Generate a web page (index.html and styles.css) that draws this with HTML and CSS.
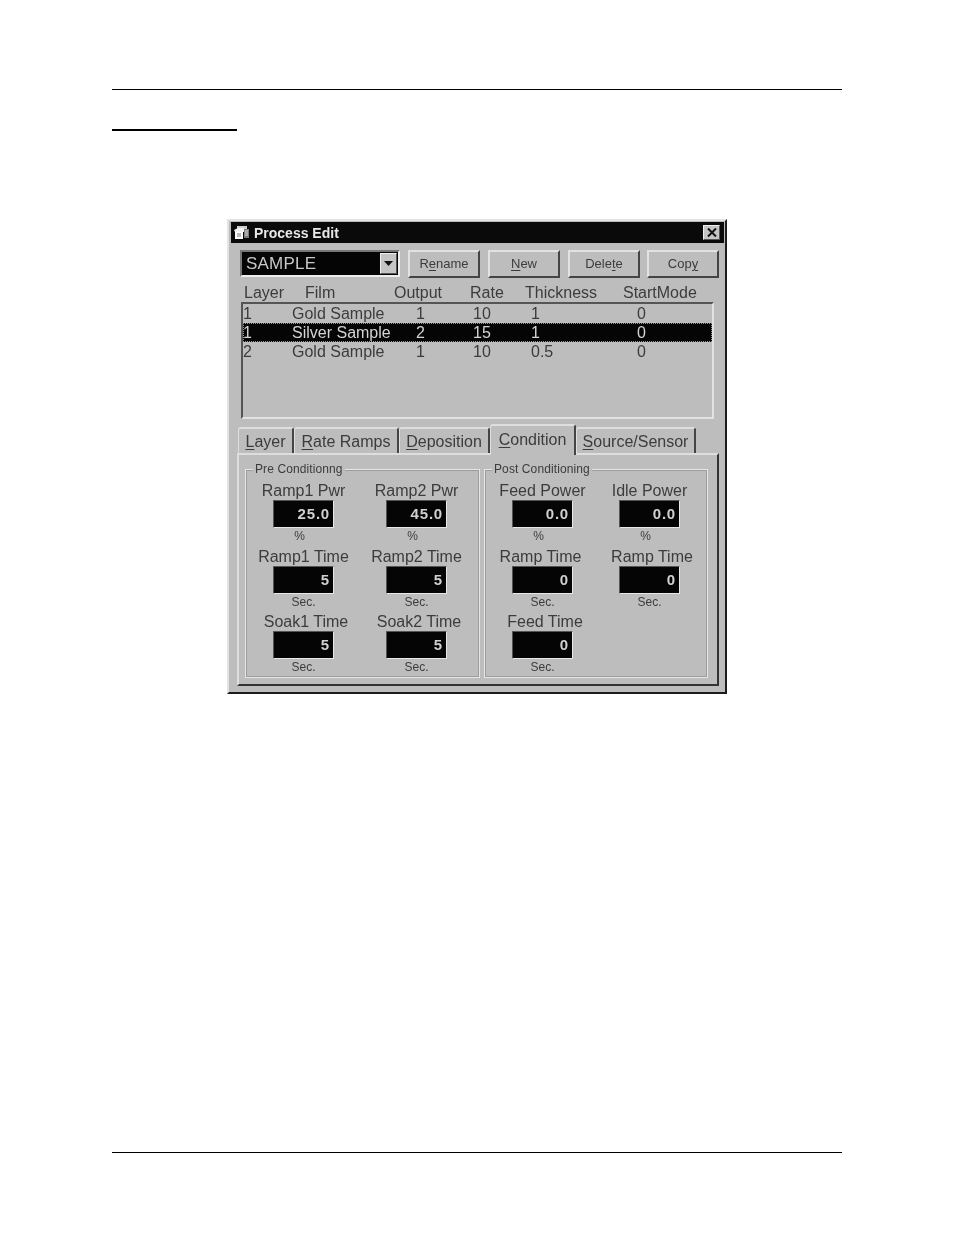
FILE: index.html
```html
<!DOCTYPE html>
<html lang="en">
<head>
<meta charset="UTF-8" />
<title>Process Edit</title>
<link rel="stylesheet" href="styles.css">
</head>
<body>
<div class="page">
  <div class="top-rule"></div>
  <div class="heading-rule"></div>

  <div class="dialog">
    <!-- Title bar -->
    <div class="titlebar">
      <svg class="title-icon" width="17" height="15" viewBox="0 0 17 15" aria-hidden="true">
        <path d="M4 1 H14 V4 H4 Z" fill="#cfcfcf"/>
        <path d="M1 5 L5 3 H11 V7 H2 Z" fill="#f2f2f2"/>
        <path d="M11 4 H16 V13 H11 Z" fill="#7d7d7d"/>
        <path d="M12 6 H15 M12 8 H15 M12 10 H15" stroke="#d8d8d8" stroke-width="1"/>
        <path d="M2 7 H10 V14 H2 Z" fill="#fff"/>
        <path d="M4 9 H8 M4 11 H8" stroke="#777" stroke-width="1"/>
      </svg>
      <span class="title-text">Process Edit</span>
      <span class="close-btn">
        <svg width="10" height="9" viewBox="0 0 10 9" aria-hidden="true">
          <path d="M1 0.5 L9 8.5 M9 0.5 L1 8.5" stroke="#111" stroke-width="2" fill="none"/>
        </svg>
      </span>
    </div>

    <!-- Process selector and buttons -->
    <div class="toolbar">
      <div class="combo">
        <span class="combo-text">SAMPLE</span>
        <span class="combo-arrow"><svg width="9" height="5" viewBox="0 0 9 5" aria-hidden="true"><path d="M0 0 H9 L4.5 5 Z" fill="#111"/></svg></span>
      </div>
      <div class="btn">R<u>e</u>name</div>
      <div class="btn"><u>N</u>ew</div>
      <div class="btn">Dele<u>t</u>e</div>
      <div class="btn btn-last">Cop<u>y</u></div>
    </div>

    <!-- Layer list -->
    <div class="list-head">
      <span>Layer</span><span>Film</span><span>Output</span><span>Rate</span><span>Thickness</span><span>StartMode</span>
    </div>
    <div class="list">
      <div class="row"><span>1</span><span>Gold Sample</span><span>1</span><span>10</span><span>1</span><span>0</span></div>
      <div class="row selected"><span>1</span><span>Silver Sample</span><span>2</span><span>15</span><span>1</span><span>0</span></div>
      <div class="row"><span>2</span><span>Gold Sample</span><span>1</span><span>10</span><span>0.5</span><span>0</span></div>
    </div>

    <!-- Tabs -->
    <div class="tabs">
      <div class="tab tab-layer"><u>L</u>ayer</div>
      <div class="tab tab-rate"><u>R</u>ate Ramps</div>
      <div class="tab tab-dep"><u>D</u>eposition</div>
      <div class="tab tab-cond active"><u>C</u>ondition</div>
      <div class="tab tab-src"><u>S</u>ource/Sensor</div>
    </div>

    <div class="panel">
      <div class="group group-pre">
        <span class="group-title">Pre Conditionng</span>
        <div class="fields">
          <div class="cell"><div class="lab">Ramp1 Pwr</div><div class="value">25.0</div><div class="unit pct">%</div></div>
          <div class="cell"><div class="lab">Ramp2 Pwr</div><div class="value">45.0</div><div class="unit pct">%</div></div>
          <div class="cell"><div class="lab">Ramp1 Time</div><div class="value">5</div><div class="unit">Sec.</div></div>
          <div class="cell"><div class="lab">Ramp2 Time</div><div class="value">5</div><div class="unit">Sec.</div></div>
          <div class="cell"><div class="lab shift-r">Soak1 Time</div><div class="value">5</div><div class="unit">Sec.</div></div>
          <div class="cell"><div class="lab shift-r">Soak2 Time</div><div class="value">5</div><div class="unit">Sec.</div></div>
        </div>
      </div>
      <div class="group group-post">
        <span class="group-title">Post Conditioning</span>
        <div class="fields">
          <div class="cell"><div class="lab">Feed Power</div><div class="value">0.0</div><div class="unit pct">%</div></div>
          <div class="cell"><div class="lab">Idle Power</div><div class="value">0.0</div><div class="unit pct">%</div></div>
          <div class="cell"><div class="lab shift-l">Ramp Time</div><div class="value">0</div><div class="unit">Sec.</div></div>
          <div class="cell"><div class="lab shift-r">Ramp Time</div><div class="value">0</div><div class="unit">Sec.</div></div>
          <div class="cell"><div class="lab shift-r">Feed Time</div><div class="value">0</div><div class="unit">Sec.</div></div>
        </div>
      </div>
    </div>
  </div>

  <div class="bottom-rule"></div>
</div>
</body>
</html>
```

FILE: styles.css
```css
html, body {
  margin: 0;
  background: #fff;
}
.page {
  width: 954px;
  height: 1235px;
  padding: 89px 112px 0;
  box-sizing: border-box;
  font-family: "Liberation Sans", Arial, sans-serif;
  overflow: hidden;
}
.top-rule {
  height: 1px;
  background: #000;
  width: 730px;
}
.heading-rule {
  height: 2px;
  width: 125px;
  background: #000;
  margin-top: 39px;
}
.bottom-rule {
  height: 1px;
  background: #000;
  width: 730px;
  margin-top: 458px;
}
u {
  text-underline-offset: 2px;
}

/* Dialog window */
.dialog {
  width: 500px;
  height: 475px;
  box-sizing: border-box;
  margin: 88px 0 0 115px;
  padding: 1px 1px 0 2px;
  border: 2px solid;
  border-color: #e4e4e4 #1c1c1c #1c1c1c #e4e4e4;
  background: #bdbdbd;
  color: #3c3c3c;
  filter: blur(0.45px);
}
.titlebar {
  height: 21px;
  background: #0a0a0a;
  display: flex;
  align-items: center;
  padding: 0 4px 0 2px;
}
.title-icon {
  flex: none;
}
.title-text {
  margin-left: 4px;
  color: #e8e8e8;
  font-weight: 700;
  font-size: 14px;
}
.close-btn {
  margin-left: auto;
  width: 17px;
  height: 15px;
  background: #c4c4c4;
  border: 1px solid;
  border-color: #eee #555 #555 #eee;
  box-sizing: border-box;
  display: flex;
  align-items: center;
  justify-content: center;
}

/* Toolbar */
.toolbar {
  display: flex;
  gap: 8px;
  margin: 7px 0 0 9px;
  height: 28px;
}
.combo {
  width: 160px;
  height: 27px;
  box-sizing: border-box;
  background: #050505;
  border: 2px solid;
  border-color: #777 #eee #eee #777;
  display: flex;
  align-items: center;
}
.combo-text {
  color: #c8c8c8;
  font-size: 17px;
  margin-left: 4px;
  letter-spacing: 0.2px;
}
.combo-arrow {
  margin-left: auto;
  width: 17px;
  height: 21px;
  margin-right: 1px;
  box-sizing: border-box;
  background: #c4c4c4;
  border: 1px solid;
  border-color: #eee #555 #555 #eee;
  display: flex;
  align-items: center;
  justify-content: center;
}
.btn {
  width: 72px;
  height: 28px;
  box-sizing: border-box;
  background: #bdbdbd;
  border: 2px solid;
  border-color: #e2e2e2 #444 #444 #e2e2e2;
  font-size: 13px;
  text-align: center;
  line-height: 24px;
}
.btn-last {
  margin-left: -1px;
}

/* Layer list */
.list-head {
  display: grid;
  grid-template-columns: 61px 89px 76px 55px 98px auto;
  margin: 5px 0 0 13px;
  height: 19px;
  font-size: 16px;
  line-height: 19px;
}
.list {
  width: 473px;
  height: 117px;
  box-sizing: border-box;
  margin-left: 10px;
  border: 2px solid;
  border-color: #555 #e2e2e2 #e2e2e2 #555;
  background: #bdbdbd;
}
.row {
  display: grid;
  grid-template-columns: 49px 124px 57px 58px 106px auto;
  width: 469px;
  height: 19px;
  font-size: 16px;
  line-height: 19px;
  box-sizing: border-box;
}
.row.selected {
  background: #050505;
  color: #d4d4d4;
  outline: 1px dotted #999;
  outline-offset: -1px;
}

/* Tabs */
.tabs {
  display: flex;
  align-items: flex-end;
  margin: 8px 0 0 7px;
  height: 26px;
  position: relative;
  z-index: 1;
}
.tab {
  height: 26px;
  box-sizing: border-box;
  border-top: 2px solid #dedede;
  border-left: 1px solid #dedede;
  border-right: 2px solid #444;
  border-radius: 3px 3px 0 0;
  font-size: 16px;
  line-height: 26px;
  text-align: center;
  background: #bdbdbd;
}
.tab-layer { width: 56px; }
.tab-rate { width: 105px; }
.tab-dep { width: 91px; }
.tab-cond { width: 86px; }
.tab-src { width: 120px; }
.tab.active {
  height: 31px;
  margin-bottom: -2px;
  line-height: 27px;
}

/* Panel */
.panel {
  width: 482px;
  height: 233px;
  box-sizing: border-box;
  margin-left: 6px;
  border: 2px solid;
  border-color: #dedede #333 #333 #dedede;
  padding: 14px 0 0 6px;
  display: flex;
  gap: 4px;
}
.group {
  height: 209px;
  box-sizing: border-box;
  border: 1px solid #e6e6e6;
  box-shadow: inset 0 0 0 1px #9c9c9c;
  position: relative;
  padding-top: 12px;
}
.group-pre { width: 235px; padding-left: 27px; }
.group-post { width: 224px; padding-left: 27px; }
.group-title {
  position: absolute;
  top: -8px;
  left: 7px;
  padding: 0 2px;
  background: #bdbdbd;
  font-size: 12px;
  line-height: 15px;
  letter-spacing: 0.1px;
}
.fields {
  display: grid;
  grid-template-columns: 61px 61px;
  grid-auto-rows: 65.5px;
}
.group-pre .fields { column-gap: 52px; }
.group-post .fields { column-gap: 46px; }

.lab {
  margin: 0 -30px;
  height: 18px;
  font-size: 16px;
  line-height: 18px;
  text-align: center;
  white-space: nowrap;
}
.shift-r { padding-left: 5px; }
.shift-l { padding-right: 4px; }
.value {
  height: 28px;
  box-sizing: border-box;
  background: #050505;
  border: 1px solid;
  border-color: #555 #e8e8e8 #e8e8e8 #555;
  color: #d0d0d0;
  font-weight: 700;
  font-size: 15px;
  letter-spacing: 0.8px;
  line-height: 26px;
  text-align: right;
  padding-right: 3px;
}
.unit {
  margin-top: 2px;
  font-size: 12px;
  line-height: 13px;
  text-align: center;
}
.unit.pct {
  padding-right: 8px;
}
```
